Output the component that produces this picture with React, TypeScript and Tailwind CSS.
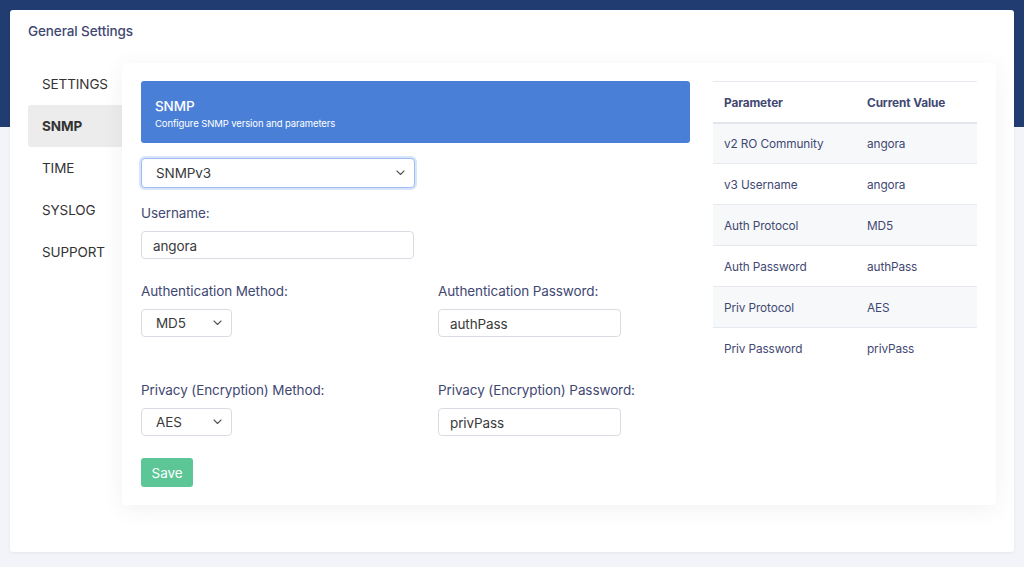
import React from 'react';

const font = { fontFamily: 'Inter, "Noto Sans", "Liberation Sans", sans-serif' };

const navItems = ['SETTINGS', 'SNMP', 'TIME', 'SYSLOG', 'SUPPORT'];

const tableRows: [string, string][] = [
  ['v2 RO Community', 'angora'],
  ['v3 Username', 'angora'],
  ['Auth Protocol', 'MD5'],
  ['Auth Password', 'authPass'],
  ['Priv Protocol', 'AES'],
  ['Priv Password', 'privPass'],
];

function Chevron() {
  return (
    <svg width="9" height="6" viewBox="0 0 9 6" className="shrink-0">
      <path d="M1 1l3.5 3.5L8 1" fill="none" stroke="#555" strokeWidth="1.1" strokeLinecap="round" strokeLinejoin="round" />
    </svg>
  );
}

function SelectBox({ value, width, focused }: { value: string; width: string; focused?: boolean }) {
  return (
    <div
      className={`flex items-center justify-between ${width} rounded-[4px] bg-white pl-[14px] pr-[9px] text-[13.5px] text-[#3a3a3a] ${
        focused
          ? 'h-[30px] border border-[#9dbcef] shadow-[0_0_0_2px_#d9e5fa]'
          : 'h-[28px] border border-[#d9dce3]'
      }`}
    >
      <span className="pt-[1px]">{value}</span>
      <Chevron />
    </div>
  );
}

function TextBox({ value, width }: { value: string; width: string }) {
  return (
    <div className={`flex items-center h-[28px] ${width} rounded-[4px] border border-[#d9dce3] bg-white px-[11px] pt-[2px] text-[13.5px] text-[#3a3a3a]`}>
      {value}
    </div>
  );
}

function Label({ children }: { children: React.ReactNode }) {
  return <div className="text-[13.5px] leading-[20px] text-[#3f4872]">{children}</div>;
}

export default function App() {
  return (
    <div
      className="w-full h-[567px] overflow-hidden pt-[10px] pl-[10px] tracking-[-0.1px] bg-[linear-gradient(to_bottom,#213c70_127px,#f3f4f9_127px)]"
      style={font}
    >
      <div className="w-[1004px] h-[542px] bg-white rounded-[3px] shadow-[0_1px_3px_rgba(0,0,0,0.06)]">
        <div className="pl-[18px] pt-[11px] h-[53px] text-[13.5px] leading-[20px] font-medium text-[#3f4872]">
          General Settings
        </div>
        <div className="flex pl-[18px]">
          {/* sidebar */}
          <div className="w-[94px] flex flex-col">
            {navItems.map((item) => (
              <div
                key={item}
                className={`h-[42px] flex items-center pl-[14px] text-[13.5px] text-[#333] rounded-l-[3px] ${
                  item === 'SNMP' ? 'bg-[#ececec] font-bold' : ''
                }`}
              >
                {item}
              </div>
            ))}
          </div>

          {/* content card */}
          <div className="w-[874px] h-[442px] bg-white rounded-[3px] shadow-[0_4px_24px_rgba(0,0,0,0.06)] flex pt-[18px] pl-[19px] pr-[19px] gap-[23px]">
            <div className="w-[549px] flex flex-col">
              <div className="h-[62px] bg-[#4a7fd7] rounded-[3px] pl-[14px] pt-[15px] text-white">
                <div className="text-[13.5px] leading-[20px] font-medium">SNMP</div>
                <div className="text-[9.5px] leading-[14px] mt-[1px]">Configure SNMP version and parameters</div>
              </div>

              <div className="mt-[15px]">
                <SelectBox value="SNMPv3" width="w-[274px]" focused />
              </div>

              <div className="mt-[15px]">
                <Label>Username:</Label>
              </div>
              <div className="mt-[8px]">
                <TextBox value="angora" width="w-[273px]" />
              </div>

              <div className="grid grid-cols-[297px_1fr] mt-[22px]">
                <div>
                  <Label>Authentication Method:</Label>
                  <div className="mt-[8px]">
                    <SelectBox value="MD5" width="w-[91px]" />
                  </div>
                </div>
                <div>
                  <Label>Authentication Password:</Label>
                  <div className="mt-[8px]">
                    <TextBox value="authPass" width="w-[183px]" />
                  </div>
                </div>
              </div>

              <div className="grid grid-cols-[297px_1fr] mt-[43px]">
                <div>
                  <Label>Privacy (Encryption) Method:</Label>
                  <div className="mt-[8px]">
                    <SelectBox value="AES" width="w-[91px]" />
                  </div>
                </div>
                <div>
                  <Label>Privacy (Encryption) Password:</Label>
                  <div className="mt-[8px]">
                    <TextBox value="privPass" width="w-[183px]" />
                  </div>
                </div>
              </div>

              <div className="mt-[22px]">
                <button className="h-[29px] w-[52px] rounded-[3px] bg-[#5cc697] text-white text-[13.5px] pt-[1px]">
                  Save
                </button>
              </div>
            </div>

            {/* table */}
            <div className="w-[264px]">
              <table className="w-full border-collapse text-[11.8px] text-[#3f4872]">
                <thead>
                  <tr className="h-[41px] border-t border-[#e6e9ef] border-b-2 border-b-[#e3e6ec]">
                    <th className="text-left font-bold pl-[11px] pt-[4px]">Parameter</th>
                    <th className="text-left font-bold pl-0 pt-[4px]">Current Value</th>
                  </tr>
                </thead>
                <tbody>
                  {tableRows.map(([k, v], i) => (
                    <tr
                      key={k}
                      className={`h-[41px] border-t border-[#e6e9ef] first:border-t-0 ${i % 2 === 0 ? 'bg-[#f7f8fa]' : ''}`}
                    >
                      <td className="pl-[11px] w-[154px] pt-[3px]">{k}</td>
                      <td className="pt-[3px]">{v}</td>
                    </tr>
                  ))}
                </tbody>
              </table>
            </div>
          </div>
        </div>
      </div>
    </div>
  );
}
